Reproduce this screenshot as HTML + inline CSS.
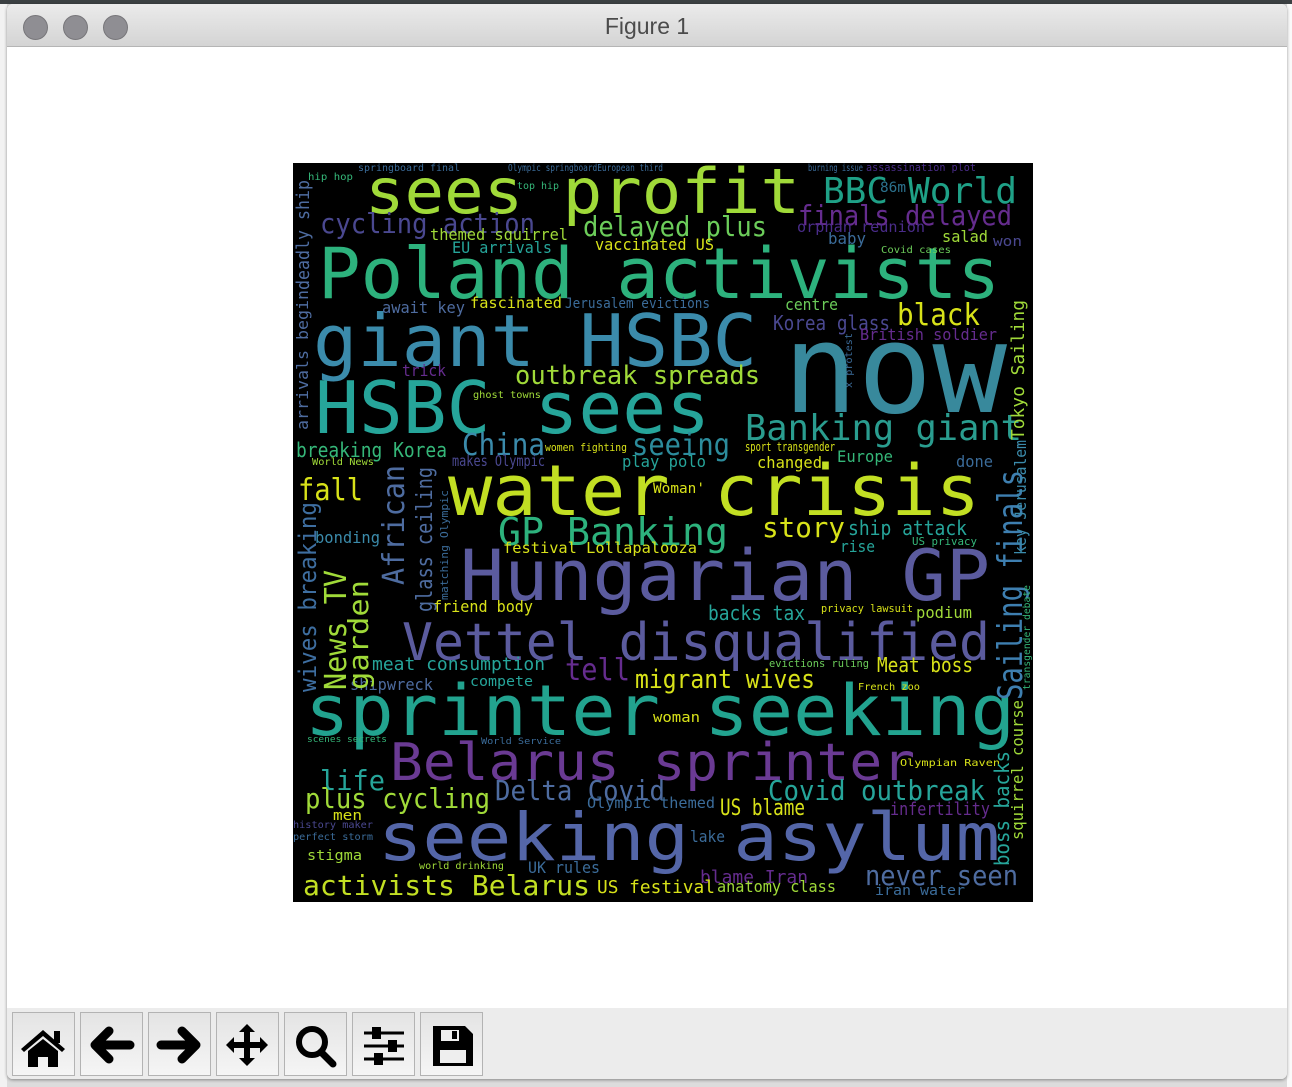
<!DOCTYPE html>
<html><head><meta charset="utf-8"><style>
html,body{margin:0;padding:0}
body{width:1292px;height:1087px;background:#dcdcdc;position:relative;overflow:hidden;font-family:"Liberation Sans",sans-serif}
.top{position:absolute;left:0;top:0;width:1292px;height:4px;background:#3b4042}
.lside{position:absolute;left:0;top:4px;width:7px;height:1083px;background:#f2f2f2}
.rside{position:absolute;left:1287px;top:4px;width:5px;height:1083px;background:#fafafa}
.win{position:absolute;left:7px;top:4px;width:1280px;height:1075px;border-radius:6px;background:#fff;overflow:hidden;box-shadow:0 1px 3px rgba(0,0,0,.4)}
.tb{position:absolute;left:0;top:0;width:1280px;height:42px;background:linear-gradient(#ebebeb,#d4d4d4);border-bottom:1px solid #b5b5b5}
.dot{position:absolute;top:11px;width:23px;height:23px;border-radius:50%;background:#8f8e93;border:1px solid #77767a}
.title{position:absolute;left:0;width:1280px;top:9px;text-align:center;font-size:23px;color:#4b4b4b}
.bar{position:absolute;left:0;top:1004px;width:1280px;height:71px;background:#ececec}
.btn{position:absolute;top:4px;width:61px;height:62px;border:1px solid #b3b3b3;background:linear-gradient(#e4e4e4,#f5f5f5)}
.btn svg{position:absolute;left:0;top:0}
.wc{position:absolute;left:286px;top:159px;width:740px;height:739px;background:#000}
</style></head><body>
<div class="top"></div><div class="lside"></div><div class="rside"></div>
<div class="win">
 <div class="tb">
  <div class="dot" style="left:16px"></div><div class="dot" style="left:56px"></div><div class="dot" style="left:96px"></div>
  <div class="title">Figure 1</div>
 </div>
 <div class="wc"></div>
 <div class="bar">
  <div class="btn" style="left:5px"><svg width="61" height="62" viewBox="0 0 61 62"><path d="M8 36 L30 17 L52 36 L49 39 L30 23 L11 39Z" fill="#000"/><rect x="41" y="18" width="6" height="12" fill="#000"/><path d="M15 38 L30 26 L45 38 V54 H35 V44 H25 V54 H15Z" fill="#000"/></svg></div>
  <div class="btn" style="left:73px"><svg width="61" height="62" viewBox="0 0 61 62"><path d="M14 32 L28 18 M14 32 L28 46 M14 32 H49" stroke="#000" stroke-width="9" stroke-linecap="round" stroke-linejoin="round" fill="none"/></svg></div>
  <div class="btn" style="left:141px"><svg width="61" height="62" viewBox="0 0 61 62"><path d="M47 32 L33 18 M47 32 L33 46 M47 32 H12" stroke="#000" stroke-width="9" stroke-linecap="round" stroke-linejoin="round" fill="none"/></svg></div>
  <div class="btn" style="left:209px"><svg width="61" height="62" viewBox="0 0 61 62"><path d="M30 11 L38 19 H33 V29 H43 V24 L51 32 L43 40 V35 H33 V45 H38 L30 53 L22 45 H27 V35 H17 V40 L9 32 L17 24 V29 H27 V19 H22Z" fill="#000"/></svg></div>
  <div class="btn" style="left:277px"><svg width="61" height="62" viewBox="0 0 61 62"><circle cx="27" cy="29" r="13" stroke="#000" stroke-width="6" fill="none"/><path d="M36 39 L48 51" stroke="#000" stroke-width="7" stroke-linecap="round"/></svg></div>
  <div class="btn" style="left:345px"><svg width="61" height="62" viewBox="0 0 61 62"><path d="M11 20 H51 M11 33 H51 M11 46 H51" stroke="#000" stroke-width="3"/><rect x="19" y="14" width="9" height="12" fill="#000"/><rect x="35" y="27" width="9" height="12" fill="#000"/><rect x="21" y="40" width="9" height="12" fill="#000"/></svg></div>
  <div class="btn" style="left:413px"><svg width="61" height="62" viewBox="0 0 61 62"><path d="M12 13 H44 L52 21 V53 H12Z" fill="#000"/><rect x="20" y="17" width="18" height="11" fill="#eee"/><rect x="31" y="18" width="5" height="8" fill="#000"/><rect x="19" y="37" width="26" height="13" fill="#eee"/></svg></div>
 </div>
</div>
<svg style="position:absolute;left:0;top:0" width="1292" height="1087" viewBox="0 0 1292 1087" font-family="DejaVu Sans Mono, Liberation Mono, monospace" lengthAdjust="spacingAndGlyphs">
<g lengthAdjust="spacingAndGlyphs">
<text x="365" y="213" font-size="62" fill="#a0da39" textLength="435" lengthAdjust="spacingAndGlyphs">sees profit</text>
<text x="823" y="203" font-size="36" fill="#1fa187" textLength="65" lengthAdjust="spacingAndGlyphs">BBC</text>
<text x="880" y="192" font-size="14" fill="#2c728e" textLength="26" lengthAdjust="spacingAndGlyphs">86m</text>
<text x="908" y="203" font-size="36" fill="#1fa187" textLength="109" lengthAdjust="spacingAndGlyphs">World</text>
<text x="318" y="298" font-size="70" fill="#2db27d" textLength="682" lengthAdjust="spacingAndGlyphs">Poland activists</text>
<text x="313" y="366" font-size="72" fill="#3b8bab" textLength="444" lengthAdjust="spacingAndGlyphs">giant HSBC</text>
<text x="783" y="412" font-size="124" fill="#38899c" textLength="224" lengthAdjust="spacingAndGlyphs">now</text>
<text x="315" y="433" font-size="72" fill="#26a59a" textLength="395" lengthAdjust="spacingAndGlyphs">HSBC sees</text>
<text x="448" y="515" font-size="70" fill="#c2df23" textLength="532" lengthAdjust="spacingAndGlyphs">water crisis</text>
<text x="460" y="600" font-size="70" fill="#5b5b9e" textLength="530" lengthAdjust="spacingAndGlyphs">Hungarian GP</text>
<text x="402" y="660" font-size="52" fill="#5b5b9e" textLength="588" lengthAdjust="spacingAndGlyphs">Vettel disqualified</text>
<text x="305" y="735" font-size="70" fill="#22a38f" textLength="710" lengthAdjust="spacingAndGlyphs">sprinter seeking</text>
<text x="390" y="780" font-size="52" fill="#6a3a93" textLength="525" lengthAdjust="spacingAndGlyphs">Belarus sprinter</text>
<text x="378" y="860" font-size="66" fill="#5466a8" textLength="622" lengthAdjust="spacingAndGlyphs">seeking asylum</text>
<text x="303" y="895" font-size="28" fill="#c2df23" textLength="287" lengthAdjust="spacingAndGlyphs">activists Belarus</text>
<text x="320" y="233" font-size="28" fill="#4a4890" textLength="215" lengthAdjust="spacingAndGlyphs">cycling action</text>
<text x="583" y="236" font-size="28" fill="#6ccd5a" textLength="184" lengthAdjust="spacingAndGlyphs">delayed plus</text>
<text x="798" y="225" font-size="28" fill="#652c8e" textLength="214" lengthAdjust="spacingAndGlyphs">finals delayed</text>
<text x="515" y="384" font-size="26" fill="#a0da39" textLength="245" lengthAdjust="spacingAndGlyphs">outbreak spreads</text>
<text x="897" y="325" font-size="30" fill="#d8e219" textLength="83" lengthAdjust="spacingAndGlyphs">black</text>
<text x="745" y="440" font-size="36" fill="#2a9d8f" textLength="277" lengthAdjust="spacingAndGlyphs">Banking giant</text>
<text x="296" y="457" font-size="20" fill="#35b779" textLength="151" lengthAdjust="spacingAndGlyphs">breaking Korea</text>
<text x="462" y="455" font-size="30" fill="#3b8bab" textLength="83" lengthAdjust="spacingAndGlyphs">China</text>
<text x="632" y="455" font-size="30" fill="#2c8c9c" textLength="98" lengthAdjust="spacingAndGlyphs">seeing</text>
<text x="298" y="500" font-size="30" fill="#d8e219" textLength="65" lengthAdjust="spacingAndGlyphs">fall</text>
<text x="498" y="545" font-size="38" fill="#2db27d" textLength="230" lengthAdjust="spacingAndGlyphs">GP Banking</text>
<text x="762" y="537" font-size="28" fill="#d8e219" textLength="83" lengthAdjust="spacingAndGlyphs">story</text>
<text x="848" y="535" font-size="20" fill="#26a59a" textLength="119" lengthAdjust="spacingAndGlyphs">ship attack</text>
<text x="495" y="800" font-size="28" fill="#4e6ca0" textLength="170" lengthAdjust="spacingAndGlyphs">Delta Covid</text>
<text x="305" y="808" font-size="28" fill="#a0da39" textLength="185" lengthAdjust="spacingAndGlyphs">plus cycling</text>
<text x="320" y="790" font-size="28" fill="#26a59a" textLength="65" lengthAdjust="spacingAndGlyphs">life</text>
<text x="768" y="800" font-size="28" fill="#26a59a" textLength="217" lengthAdjust="spacingAndGlyphs">Covid outbreak</text>
<text x="720" y="815" font-size="22" fill="#d8e219" textLength="85" lengthAdjust="spacingAndGlyphs">US blame</text>
<text x="865" y="885" font-size="28" fill="#4e6ca0" textLength="153" lengthAdjust="spacingAndGlyphs">never seen</text>
<text x="635" y="688" font-size="26" fill="#d8e219" textLength="180" lengthAdjust="spacingAndGlyphs">migrant wives</text>
<text x="708" y="620" font-size="20" fill="#26a59a" textLength="97" lengthAdjust="spacingAndGlyphs">backs tax</text>
<text x="877" y="672" font-size="20" fill="#d8e219" textLength="96" lengthAdjust="spacingAndGlyphs">Meat boss</text>
<text x="916" y="618" font-size="16" fill="#a0da39" textLength="56" lengthAdjust="spacingAndGlyphs">podium</text>
<text x="372" y="670" font-size="18" fill="#26a59a" textLength="173" lengthAdjust="spacingAndGlyphs">meat consumption</text>
<text x="565" y="680" font-size="30" fill="#652c8e" textLength="65" lengthAdjust="spacingAndGlyphs">tell</text>
<text x="773" y="330" font-size="20" fill="#4a4890" textLength="117" lengthAdjust="spacingAndGlyphs">Korea glass</text>
<text x="860" y="340" font-size="16" fill="#652c8e" textLength="137" lengthAdjust="spacingAndGlyphs">British soldier</text>
<text x="430" y="240" font-size="16" fill="#a0da39" textLength="138" lengthAdjust="spacingAndGlyphs">themed squirrel</text>
<text x="452" y="253" font-size="16" fill="#26a59a" textLength="100" lengthAdjust="spacingAndGlyphs">EU arrivals</text>
<text x="595" y="250" font-size="16" fill="#d8e219" textLength="119" lengthAdjust="spacingAndGlyphs">vaccinated US</text>
<text x="470" y="308" font-size="15" fill="#d8e219" textLength="92" lengthAdjust="spacingAndGlyphs">fascinated</text>
<text x="382" y="313" font-size="16" fill="#4e6ca0" textLength="83" lengthAdjust="spacingAndGlyphs">await key</text>
<text x="565" y="308" font-size="14" fill="#3b6c9a" textLength="145" lengthAdjust="spacingAndGlyphs">Jerusalem evictions</text>
<text x="785" y="310" font-size="16" fill="#6ccd5a" textLength="53" lengthAdjust="spacingAndGlyphs">centre</text>
<text x="797" y="232" font-size="15" fill="#4a2c8a" textLength="128" lengthAdjust="spacingAndGlyphs">orphan reunion</text>
<text x="828" y="244" font-size="16" fill="#3b6c9a" textLength="38" lengthAdjust="spacingAndGlyphs">baby</text>
<text x="942" y="242" font-size="16" fill="#a0da39" textLength="46" lengthAdjust="spacingAndGlyphs">salad</text>
<text x="993" y="246" font-size="14" fill="#4a4890" textLength="29" lengthAdjust="spacingAndGlyphs">won</text>
<text x="837" y="462" font-size="16" fill="#35b779" textLength="56" lengthAdjust="spacingAndGlyphs">Europe</text>
<text x="757" y="468" font-size="16" fill="#d8e219" textLength="65" lengthAdjust="spacingAndGlyphs">changed</text>
<text x="622" y="467" font-size="16" fill="#26a59a" textLength="84" lengthAdjust="spacingAndGlyphs">play polo</text>
<text x="452" y="466" font-size="15" fill="#4a4890" textLength="93" lengthAdjust="spacingAndGlyphs">makes Olympic</text>
<text x="956" y="467" font-size="16" fill="#3b6c9a" textLength="37" lengthAdjust="spacingAndGlyphs">done</text>
<text x="315" y="543" font-size="16" fill="#3b8bab" textLength="65" lengthAdjust="spacingAndGlyphs">bonding</text>
<text x="503" y="553" font-size="15" fill="#d8e219" textLength="194" lengthAdjust="spacingAndGlyphs">festival Lollapalooza</text>
<text x="840" y="552" font-size="16" fill="#26a59a" textLength="35" lengthAdjust="spacingAndGlyphs">rise</text>
<text x="433" y="612" font-size="16" fill="#d8e219" textLength="100" lengthAdjust="spacingAndGlyphs">friend body</text>
<text x="350" y="690" font-size="16" fill="#4e6ca0" textLength="83" lengthAdjust="spacingAndGlyphs">shipwreck</text>
<text x="470" y="686" font-size="14" fill="#26a59a" textLength="63" lengthAdjust="spacingAndGlyphs">compete</text>
<text x="653" y="722" font-size="14" fill="#d8e219" textLength="47" lengthAdjust="spacingAndGlyphs">woman</text>
<text x="333" y="820" font-size="14" fill="#d8e219" textLength="29" lengthAdjust="spacingAndGlyphs">men</text>
<text x="307" y="860" font-size="14" fill="#a0da39" textLength="55" lengthAdjust="spacingAndGlyphs">stigma</text>
<text x="528" y="873" font-size="16" fill="#3b6c9a" textLength="72" lengthAdjust="spacingAndGlyphs">UK rules</text>
<text x="700" y="883" font-size="18" fill="#652c8e" textLength="108" lengthAdjust="spacingAndGlyphs">blame Iran</text>
<text x="597" y="893" font-size="18" fill="#d8e219" textLength="118" lengthAdjust="spacingAndGlyphs">US festival</text>
<text x="717" y="892" font-size="16" fill="#a0da39" textLength="119" lengthAdjust="spacingAndGlyphs">anatomy class</text>
<text x="875" y="895" font-size="14" fill="#3b6c9a" textLength="90" lengthAdjust="spacingAndGlyphs">iran water</text>
<text x="690" y="842" font-size="16" fill="#3b6c9a" textLength="35" lengthAdjust="spacingAndGlyphs">lake</text>
<text x="587" y="808" font-size="15" fill="#3b6c9a" textLength="128" lengthAdjust="spacingAndGlyphs">Olympic themed</text>
<text x="890" y="815" font-size="18" fill="#652c8e" textLength="100" lengthAdjust="spacingAndGlyphs">infertility</text>
<text x="402" y="376" font-size="16" fill="#652c8e" textLength="44" lengthAdjust="spacingAndGlyphs">trick</text>
<text x="653" y="493" font-size="14" fill="#d8e219" textLength="52" lengthAdjust="spacingAndGlyphs">Woman'</text>
<text x="745" y="451" font-size="12" fill="#d8e219" textLength="90" lengthAdjust="spacingAndGlyphs">sport transgender</text>
<text x="545" y="451" font-size="11" fill="#d8e219" textLength="82" lengthAdjust="spacingAndGlyphs">women fighting</text>
<text x="473" y="398" font-size="10" fill="#a0da39" textLength="68" lengthAdjust="spacingAndGlyphs">ghost towns</text>
<text x="858" y="690" font-size="10" fill="#d8e219" textLength="62" lengthAdjust="spacingAndGlyphs">French zoo</text>
<text x="900" y="766" font-size="10" fill="#d8e219" textLength="100" lengthAdjust="spacingAndGlyphs">Olympian Raven</text>
<text x="769" y="667" font-size="11" fill="#6ccd5a" textLength="100" lengthAdjust="spacingAndGlyphs">evictions ruling</text>
<text x="821" y="612" font-size="11" fill="#d8e219" textLength="92" lengthAdjust="spacingAndGlyphs">privacy lawsuit</text>
<text x="912" y="545" font-size="11" fill="#35b779" textLength="65" lengthAdjust="spacingAndGlyphs">US privacy</text>
<text x="881" y="253" font-size="10" fill="#6ccd5a" textLength="70" lengthAdjust="spacingAndGlyphs">Covid cases</text>
<text x="866" y="171" font-size="11" fill="#4a2c8a" textLength="110" lengthAdjust="spacingAndGlyphs">assassination plot</text>
<text x="808" y="171" font-size="10" fill="#3b6c9a" textLength="55" lengthAdjust="spacingAndGlyphs">burning issue</text>
<text x="358" y="171" font-size="10" fill="#3b6c9a" textLength="102" lengthAdjust="spacingAndGlyphs">springboard final</text>
<text x="508" y="171" font-size="10" fill="#3b6c9a" textLength="155" lengthAdjust="spacingAndGlyphs">Olympic springboardEuropean third</text>
<text x="308" y="180" font-size="10" fill="#35b779" textLength="45" lengthAdjust="spacingAndGlyphs">hip hop</text>
<text x="517" y="189" font-size="10" fill="#35b779" textLength="42" lengthAdjust="spacingAndGlyphs">top hip</text>
<text x="307" y="742" font-size="9" fill="#35b779" textLength="80" lengthAdjust="spacingAndGlyphs">scenes secrets</text>
<text x="481" y="744" font-size="9" fill="#3b6c9a" textLength="80" lengthAdjust="spacingAndGlyphs">World Service</text>
<text x="293" y="828" font-size="10" fill="#4a4890" textLength="80" lengthAdjust="spacingAndGlyphs">history maker</text>
<text x="293" y="840" font-size="10" fill="#3b6c9a" textLength="80" lengthAdjust="spacingAndGlyphs">perfect storm</text>
<text x="419" y="869" font-size="10" fill="#a0da39" textLength="85" lengthAdjust="spacingAndGlyphs">world drinking</text>
<text x="312" y="465" font-size="10" fill="#a0da39" textLength="62" lengthAdjust="spacingAndGlyphs">World News</text>
</g>
<g font-family="DejaVu Sans Mono, Liberation Mono, monospace">
<text transform="translate(1022,700) rotate(-90)" font-size="34" fill="#3e7fb0" textLength="230" lengthAdjust="spacingAndGlyphs">Sailing finals</text>
<text transform="translate(1026,555) rotate(-90)" font-size="16" fill="#3b8bab" textLength="115" lengthAdjust="spacingAndGlyphs">key Jerusalem</text>
<text transform="translate(1024,440) rotate(-90)" font-size="18" fill="#a0da39" textLength="140" lengthAdjust="spacingAndGlyphs">Tokyo Sailing</text>
<text transform="translate(309,290) rotate(-90)" font-size="18" fill="#4e6ca0" textLength="110" lengthAdjust="spacingAndGlyphs">deadly ship</text>
<text transform="translate(308,430) rotate(-90)" font-size="16" fill="#4e6ca0" textLength="140" lengthAdjust="spacingAndGlyphs">arrivals begin</text>
<text transform="translate(316,692) rotate(-90)" font-size="24" fill="#3e6ea0" textLength="190" lengthAdjust="spacingAndGlyphs">wives breaking</text>
<text transform="translate(346,690) rotate(-90)" font-size="30" fill="#a0da39" textLength="120" lengthAdjust="spacingAndGlyphs">News TV</text>
<text transform="translate(368,690) rotate(-90)" font-size="28" fill="#a0da39" textLength="110" lengthAdjust="spacingAndGlyphs">garden</text>
<text transform="translate(404,585) rotate(-90)" font-size="30" fill="#4e6ca0" textLength="120" lengthAdjust="spacingAndGlyphs">African</text>
<text transform="translate(432,612) rotate(-90)" font-size="22" fill="#4e6ca0" textLength="145" lengthAdjust="spacingAndGlyphs">glass ceiling</text>
<text transform="translate(1023,840) rotate(-90)" font-size="16" fill="#a0da39" textLength="140" lengthAdjust="spacingAndGlyphs">squirrel course</text>
<text transform="translate(1009,866) rotate(-90)" font-size="20" fill="#26a59a" textLength="115" lengthAdjust="spacingAndGlyphs">boss backs</text>
<text transform="translate(1030,690) rotate(-90)" font-size="10" fill="#35b779" textLength="105" lengthAdjust="spacingAndGlyphs">transgender debate</text>
<text transform="translate(448,600) rotate(-90)" font-size="11" fill="#3b6c9a" textLength="110" lengthAdjust="spacingAndGlyphs">matching Olympic</text>
<text transform="translate(852,388) rotate(-90)" font-size="10" fill="#3b6c9a" textLength="55" lengthAdjust="spacingAndGlyphs">x protest</text>
</g>
</svg>
</body></html>
